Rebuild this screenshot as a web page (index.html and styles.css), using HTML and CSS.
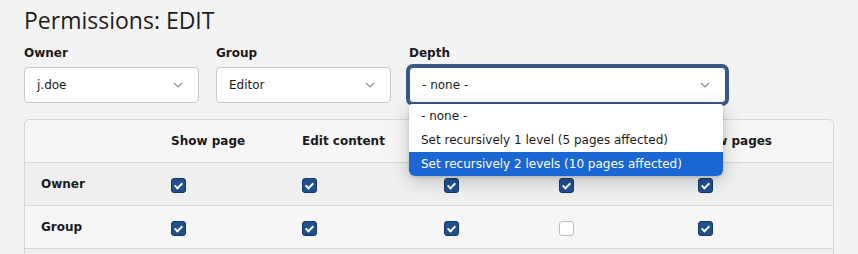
FILE: index.html
```html
<!DOCTYPE html>
<html lang="en">
<head>
<meta charset="utf-8">
<title>Permissions: EDIT</title>
<link rel="stylesheet" href="styles.css">
</head>
<body>
<main class="page">
  <h1 class="title">Permissions: EDIT</h1>
  <div class="fields">
    <div class="field field-owner">
      <label class="label">Owner</label>
      <div class="select"><span>j.doe</span><svg class="chev" width="10" height="6" viewBox="0 0 10 6"><polyline points="1,1 5,5 9,1" fill="none" stroke="#8a8a8a" stroke-width="1.1"/></svg></div>
    </div>
    <div class="field field-group">
      <label class="label">Group</label>
      <div class="select"><span>Editor</span><svg class="chev" width="10" height="6" viewBox="0 0 10 6"><polyline points="1,1 5,5 9,1" fill="none" stroke="#8a8a8a" stroke-width="1.1"/></svg></div>
    </div>
    <div class="field field-depth">
      <label class="label">Depth</label>
      <div class="select select-open"><span>- none -</span><svg class="chev" width="10" height="6" viewBox="0 0 10 6"><polyline points="1,1 5,5 9,1" fill="none" stroke="#8a8a8a" stroke-width="1.1"/></svg></div>
      <ul class="menu">
        <li class="opt">- none -</li>
        <li class="opt">Set recursively 1 level (5 pages affected)</li>
        <li class="opt opt-active">Set recursively 2 levels (10 pages affected)</li>
      </ul>
    </div>
  </div>
  <div class="table">
    <div class="row row-head">
      <div class="cell"></div>
      <div class="cell th">Show page</div>
      <div class="cell th">Edit content</div>
      <div class="cell th under">Edit page</div>
      <div class="cell th under">Delete</div>
      <div class="cell th">New pages</div>
      <div class="cell"></div>
    </div>
    <div class="row row-alt">
      <div class="cell rh">Owner</div>
      <div class="cell"><span class="cb on"></span></div>
      <div class="cell"><span class="cb on"></span></div>
      <div class="cell"><span class="cb on"></span></div>
      <div class="cell"><span class="cb on"></span></div>
      <div class="cell"><span class="cb on"></span></div>
      <div class="cell"></div>
    </div>
    <div class="row">
      <div class="cell rh">Group</div>
      <div class="cell"><span class="cb on"></span></div>
      <div class="cell"><span class="cb on"></span></div>
      <div class="cell"><span class="cb on"></span></div>
      <div class="cell"><span class="cb"></span></div>
      <div class="cell"><span class="cb on"></span></div>
      <div class="cell"></div>
    </div>
    <div class="row row-alt">
      <div class="cell rh"></div>
      <div class="cell"></div>
      <div class="cell"></div>
      <div class="cell"></div>
      <div class="cell"></div>
      <div class="cell"></div>
      <div class="cell"></div>
    </div>
  </div>
</main>
</body>
</html>
```
FILE: styles.css
```css
* { box-sizing: border-box; }
html, body { margin: 0; padding: 0; }
body {
  background: #f3f3f3;
  color: #1b1b1b;
  font-family: "DejaVu Sans", Verdana, sans-serif;
  font-size: 12px;
}
.page { padding: 0 24px; }
.title {
  margin: 0;
  padding-top: 4px;
  font-family: "Open Sans", "Noto Sans", sans-serif;
  font-weight: 400;
  font-size: 23px;
  line-height: 32px;
  color: #1d1d1d;
}
.fields {
  display: flex;
  gap: 17px;
  margin-top: 9px;
}
.field { display: flex; flex-direction: column; position: relative; }
.field-owner, .field-group { width: 175px; }
.field-depth { width: 317px; margin-left: 1px; }
.label {
  font-weight: 700;
  font-size: 12px;
  line-height: 16px;
  height: 16px;
  margin-bottom: 6px;
}
.select {
  height: 36px;
  background: #fff;
  border: 1px solid #c9c9c9;
  border-radius: 4px;
  display: flex;
  align-items: center;
  justify-content: space-between;
  padding: 0 15px 0 12px;
  font-size: 12px;
}
.chev { display: block; }
.select-open {
  border-color: #3a5784;
  box-shadow: 0 0 0 3px #3a5784;
  border-radius: 4px;
}
.menu {
  position: absolute;
  top: 59px;
  left: 0;
  width: 314px;
  margin: 0;
  padding: 0;
  list-style: none;
  background: #fff;
  border-radius: 3px 3px 6px 6px;
  box-shadow: 0 4px 18px rgba(0, 0, 0, 0.22), 0 1px 3px rgba(0, 0, 0, 0.15);
  overflow: hidden;
  z-index: 5;
}
.opt {
  height: 24px;
  line-height: 24px;
  padding-left: 12px;
  font-size: 12px;
  color: #1b1b1b;
}
.opt-active { background: #1a67d3; color: #fff; }
.table {
  margin-top: 16px;
  border: 1px solid #d6d6d6;
  border-radius: 5px;
  background: #f6f6f6;
  overflow: hidden;
}
.row {
  display: grid;
  grid-template-columns: 146px 131px 142px 115px 139px 110px 1fr;
  border-top: 1px solid #d6d6d6;
}
.row-head { border-top: 0; }
.row-alt { background: #efefef; }
.cell { display: flex; align-items: center; height: 42px; line-height: 16px; }
.th, .rh { font-weight: 700; }
.under { visibility: hidden; }
.rh { padding-left: 16px; }
.cb {
  width: 15px;
  height: 15px;
  border-radius: 3px;
  border: 1px solid #bdbdbd;
  background: #fff;
  position: relative;
  margin-top: 2px;
}
.cb.on {
  background: #21508f;
  border-color: #163869;
}
.cb.on::after {
  content: "";
  position: absolute;
  left: 4px;
  top: 2px;
  width: 3px;
  height: 6px;
  border: solid #fff;
  border-width: 0 2px 2px 0;
  transform: rotate(45deg);
}
```
